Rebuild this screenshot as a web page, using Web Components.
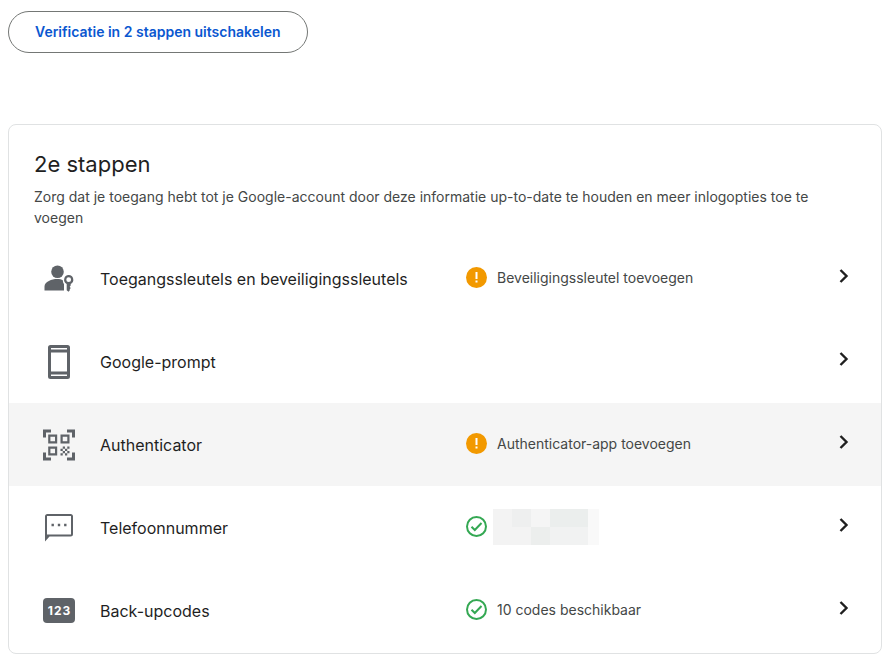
<!DOCTYPE html>
<html lang="nl">
<head>
<meta charset="utf-8">
<title>Verificatie in 2 stappen</title>
<style>
  body { margin: 0; background: #fff; color: #1f1f1f; font-family: Inter, "Liberation Sans", sans-serif; }
</style>
</head>
<body>
<verification-page>
  <pill-button slot="action">Verificatie in 2 stappen uitschakelen</pill-button>
  <step-card>
    <span slot="title">2e stappen</span>
    <span slot="description">Zorg dat je toegang hebt tot je Google-account door deze informatie up-to-date te houden en meer inlogopties toe te voegen</span>
    <step-row icon="passkey">Toegangssleutels en beveiligingssleutels
      <step-status slot="status" kind="warning">Beveiligingssleutel toevoegen</step-status>
    </step-row>
    <step-row icon="phone">Google-prompt</step-row>
    <step-row icon="qr" active>Authenticator
      <step-status slot="status" kind="warning">Authenticator-app toevoegen</step-status>
    </step-row>
    <step-row icon="message">Telefoonnummer
      <step-status slot="status" kind="ok"><hidden-number></hidden-number></step-status>
    </step-row>
    <step-row icon="codes">Back-upcodes
      <step-status slot="status" kind="ok">10 codes beschikbaar</step-status>
    </step-row>
  </step-card>
</verification-page>

<script>
const define = (name, render) => customElements.define(name, class extends HTMLElement {
  connectedCallback() {
    if (this.shadowRoot) return;
    const template = document.createElement('template');
    template.innerHTML = render(this);
    this.attachShadow({ mode: 'open' }).append(template.content.cloneNode(true));
  }
});

const icons = {
  passkey: `<circle cx="14.5" cy="8.8" r="6.3"/><path d="M1.5 27.5V23.5C1.5 18.5 9 16 14 16C16.5 16 18.8 16.5 19.8 17.2C20 19 20.2 20 21 21V27.5Z"/>
    <path fill-rule="evenodd" d="M25.7 12a4.7 4.7 0 0 1 2 8.9v1.6l-1 1.3 1 1.3-1 1.5 0 1-1.2 1.2-1.8-1.5V20.9a4.7 4.7 0 0 1 2-8.9ZM25.7 14.3a2.4 2.4 0 1 0 0 4.8 2.4 2.4 0 0 0 0-4.8Z"/>`,
  phone: `<path fill-rule="evenodd" d="M7.5 -1H24.500Q27 -1 27 1.5V30.5Q27 33 24.5 33H7.5Q5 33 5 30.5V1.5Q5 -1 7.5 -1ZM8 2V3.500H24V2ZM8 6.500V25.500H24V6.500ZM8 28.500V30H24V28.500Z"/>`,
  qr: `<path d="M0 .5H8V3.5H3V8.500H0ZM24 .5H32V8.500H29V3.500H24ZM0 23.500H3V28.500H8V31.500H0ZM29 23.500H32V31.500H24V28.500H29Z"/>
    <path fill-rule="evenodd" d="M5.2 5.500H14.200V14.500H5.200ZM7.400 7.700V12.300H12V7.700ZM17.500 5.500H26.500V14.500H17.500ZM19.700 7.700V12.300H24.300V7.700ZM5.200 17.500H14.200V26.500H5.200ZM7.400 19.700V24.300H12V19.700Z"/>
    <path d="M19.750 17.500H22V19.750H19.750ZM24.250 17.500H26.500V19.750H24.250ZM17.500 19.750H19.750V22H17.500ZM22 19.750H24.250V22H22ZM19.750 22H22V24.250H19.750ZM24.250 22H26.500V24.250H24.250ZM17.500 24.250H19.750V26.500H17.500ZM22 24.250H24.250V26.500H22Z"/>`,
  message: `<path fill-rule="evenodd" d="M4.500 2H27.500Q30 2 30 4.500V22Q30 24.500 27.500 24.500H6.500L2 29.500V4.500Q2 2 4.500 2ZM4 4V22.500H28V4Z"/>
    <path d="M8.500 11.800h2.400v2.400h-2.400ZM14.800 11.800h2.400v2.400h-2.400ZM21.100 11.800h2.400v2.400h-2.400Z"/>`
};

define('verification-page', () => `
  <style>
    :host { display: block; padding: 11px 10px 10px 8px; }
    main { display: flex; flex-direction: column; align-items: stretch; gap: 71px; }
    .action { display: flex; }
  </style>
  <main><div class="action"><slot name="action"></slot></div><slot></slot></main>`);

define('pill-button', () => `
  <style>
    :host { display: block; }
    button { height: 42px; padding: 0 26px; border: 1px solid #747775; border-radius: 21px; background: #fff;
      color: #0b57d0; font: 600 14px/20px Inter, "Liberation Sans", sans-serif; white-space: nowrap; cursor: pointer; }
  </style>
  <button type="button"><slot></slot></button>`);

define('step-card', () => `
  <style>
    :host { display: block; padding-bottom: 1px; border: 1px solid #e0e2e3; border-radius: 8px; background: #fff; overflow: hidden; }
    header { padding: 23px 25px 9px; }
    h2 { margin: 0 0 6px; font-size: 22px; line-height: 32px; font-weight: 400; }
    p { margin: 0; font-size: 14px; line-height: 21px; color: #444746; }
  </style>
  <section>
    <header><h2><slot name="title"></slot></h2><p><slot name="description"></slot></p></header>
    <slot></slot>
  </section>`);

define('step-row', el => `
  <style>
    :host { display: block; }
    :host([active]) { background: #f5f5f5; }
    a { display: grid; grid-template-columns: 32px 25px 1fr 1fr 24px; align-items: center; box-sizing: border-box;
      min-height: 83px; padding: 0 25px 0 34px; color: inherit; text-decoration: none; }
    .icon { width: 32px; height: 32px; fill: #5f6368; overflow: visible; }
    .codes { display: grid; place-items: center; height: 25px; border-radius: 4px; background: #5f6368; color: #fff;
      font-size: 12px; line-height: 16px; font-weight: 700; letter-spacing: 1px; text-indent: 1px; }
    .label { grid-column: 3; font-size: 16px; line-height: 24px; }
    .status { padding-bottom: 2px; }
    .chevron { width: 24px; height: 24px; padding-bottom: 6px; fill: none; stroke: #1f1f1f; stroke-width: 2.4; }
  </style>
  <a href="#${el.getAttribute('icon')}">
    ${el.getAttribute('icon') === 'codes'
      ? '<span class="codes">123</span>'
      : `<svg class="icon" viewBox="0 0 32 32" aria-hidden="true">${icons[el.getAttribute('icon')]}</svg>`}
    <span class="label"><slot></slot></span>
    <span class="status"><slot name="status"></slot></span>
    <svg class="chevron" viewBox="0 0 24 24" aria-hidden="true"><path d="M8.500 6L14.500 12L8.500 18"/></svg>
  </a>`);

define('step-status', el => `
  <style>
    :host { display: flex; align-items: center; gap: 10px; font-size: 14px; line-height: 20px; color: #444746; }
    svg { flex: none; width: 21px; height: 21px; }
  </style>
  ${el.getAttribute('kind') === 'warning'
    ? '<svg viewBox="0 0 21 21" aria-hidden="true"><circle cx="10.500" cy="10.500" r="10.500" fill="#f29900"/><path d="M9.500 5h2v7h-2ZM9.500 13.500h2v2h-2Z" fill="#fff"/></svg>'
    : '<svg viewBox="0 0 21 21" fill="none" stroke="#34a853" stroke-width="2" aria-hidden="true"><circle cx="10.500" cy="10.500" r="9.500"/><path d="M5.500 10.800L8.800 14L15.500 7"/></svg>'}
  <slot></slot>`);

define('hidden-number', () => `
  <style>
    :host { display: block; margin: 0 0 0 -4px; }
    svg { display: block; width: 106px; height: 36px; }
  </style>
  <svg viewBox="0 0 106 36" shape-rendering="crispEdges" role="img" aria-label="Verborgen telefoonnummer">
    <path fill="#f3f3f3" d="M0 0H95V36H0Z"/><path fill="#f9f9f9" d="M95 0H106V36H95Z"/>
    <path fill="#eeefef" d="M19 0H38V18H19Z"/><path fill="#f5f5f5" d="M38 0H57V18H38Z"/>
    <path fill="#ebeeed" d="M57 0H95V18H57Z"/><path fill="#eceeed" d="M38 18H57V36H38Z"/>
    <path fill="#f1f2f2" d="M57 18H95V36H57Z"/>
  </svg>`);
</script>
</body>
</html>
